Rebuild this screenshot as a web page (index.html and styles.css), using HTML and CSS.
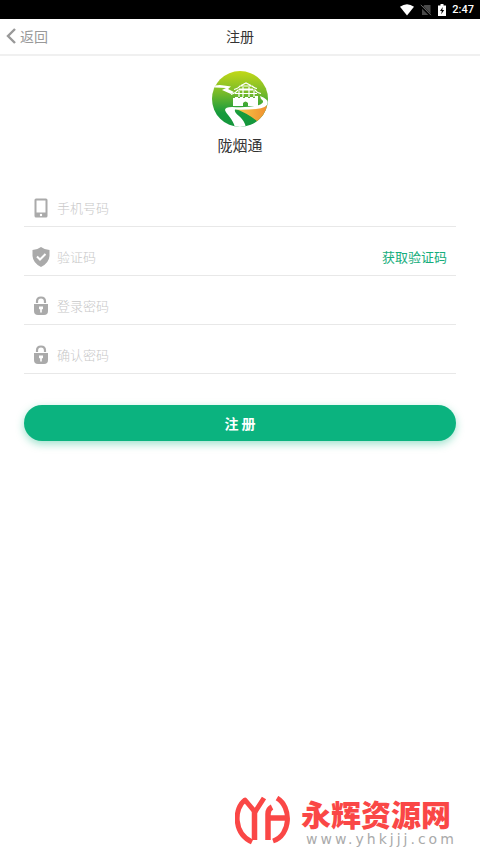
FILE: index.html
```html
<!DOCTYPE html>
<html lang="zh-CN">
<head>
<meta charset="utf-8">
<meta name="viewport" content="width=device-width, initial-scale=1">
<title>注册</title>
<link rel="stylesheet" href="styles.css">
</head>
<body>
<div class="status">
  <svg width="14" height="12" viewBox="0 0 14 12"><path d="M0 2.800Q7-2.200 14 2.800L7 11.500Z" fill="#fff"/></svg>
  <svg width="12" height="12" viewBox="0 0 12 12"><path d="M2 3.500L4.500 1H10.500V11H2Z" fill="#4a4a4a"/><path d="M.5 1.500L10.500 11.500" stroke="#000" stroke-width="2.500"/><path d="M.8 .8L11 11.200" stroke="#666" stroke-width="1"/></svg>
  <svg width="8" height="12" viewBox="0 0 8 12"><path d="M0 1.500H2.500V0H5.500V1.500H8V12H0Z" fill="#fff"/><path d="M4.800 3L2 7H3.800L3.200 10.300L6.200 6H4.300Z" fill="#000"/></svg>
  <span>2:47</span>
</div>
<header class="bar">
  <a class="back" href="#"><svg width="10" height="18" viewBox="0 0 10 18"><path d="M9 2L2 9L9 16" fill="none" stroke="#999" stroke-width="2.400"/></svg>返回</a>
  <h1>注册</h1>
</header>
<main>
  <div class="brand">
    <svg width="56" height="56" viewBox="0 0 56 56">
      <defs>
        <linearGradient id="sky" x1="0" y1="0" x2="0" y2="1"><stop offset="0" stop-color="#c2d817"/><stop offset=".4" stop-color="#75b92b"/><stop offset=".75" stop-color="#169b3c"/><stop offset="1" stop-color="#15963c"/></linearGradient>
        <linearGradient id="sand" x1="0" y1="0" x2="1" y2="0"><stop offset="0" stop-color="#f9cd4b"/><stop offset="1" stop-color="#f08b2c"/></linearGradient>
        <clipPath id="disc"><circle cx="28" cy="28" r="28"/></clipPath>
      </defs>
      <g clip-path="url(#disc)">
        <rect width="56" height="56" fill="url(#sky)"/>
        <path d="M24 38Q44 39 57 34V42L46 51Q37 43 24 38Z" fill="url(#sand)"/>
        <path d="M48 25Q56 28 56 32Q55 37 44 38Q32 39 23 38.500Q22 41 27 45Q33 50 34 57H23C22 49 14 43 13 39Q13 36 20 36Q38 37 47 34Q54 31 49 28Z" fill="#fff"/>
        <path d="M3 14.500Q8 13.500 12 14.500L19 15.500L16 18L22 21L19 23L10 19L14 17Q9 16.500 3 16.500Z" fill="#fff"/>
        <path fill-rule="evenodd" d="M21 27H23V26H26V27H28V26H31V27H33V26H36V27H38V26H41V27H43V25H46V35H21ZM31 35H36V32Q33.500 29 31 32Z" fill="#fff"/>
        <path d="M19 23.500Q24 22 26 19H43Q45 22 49 22.500M22 18.500Q27 17 28 15H40Q42 17 45 17.500M29 14.500L34 12L39 14.500M23 22.500H45M27 18H41M27 20V26M31 16V26M37 16V26M42 20V26" fill="none" stroke="#fff" stroke-width="1.200"/>
      </g>
    </svg>
    <p>陇烟通</p>
  </div>
  <form class="form">
    <div class="field">
      <label for="phone" aria-label="手机号码"><svg width="18" height="20" viewBox="0 0 18 20"><path fill-rule="evenodd" d="M4 .5H14Q15.500 .5 15.500 2V18Q15.500 19.500 14 19.500H4Q2.500 19.500 2.500 18V2Q2.500 .5 4 .5ZM4.500 2.500V14.500H13.500V2.500ZM9 15.800A1.200 1.200 0 1 0 9 18.200A1.200 1.200 0 1 0 9 15.800Z" fill="#aaa"/></svg></label>
      <input id="phone" type="tel" placeholder="手机号码">
    </div>
    <div class="field">
      <label for="code" aria-label="验证码"><svg width="18" height="20" viewBox="0 0 18 20"><path d="M9 0Q13 3 17.500 3V9Q17 16 9 20Q1 16 .5 9V3Q5 3 9 0Z" fill="#aaa"/><path d="M5 9.500L8 12.500L13.500 7" fill="none" stroke="#fff" stroke-width="2"/></svg></label>
      <input id="code" type="text" placeholder="验证码">
      <button class="send" type="button">获取验证码</button>
    </div>
    <div class="field">
      <label for="pass" aria-label="登录密码"><svg width="18" height="20" viewBox="0 0 18 20"><path d="M5 7V5.500Q5 1.500 9 1.500T13 5.500V7" fill="none" stroke="#aaa" stroke-width="2.200"/><path d="M2 8H16V15Q16 19 12 19H6Q2 19 2 15Z" fill="#aaa"/><path d="M7 10.500H11V13L9.800 13.500V16.500H8.200V13.500L7 13Z" fill="#fff"/></svg></label>
      <input id="pass" type="password" placeholder="登录密码">
    </div>
    <div class="field">
      <label for="again" aria-label="确认密码"><svg width="18" height="20" viewBox="0 0 18 20"><path d="M5 7V5.500Q5 1.500 9 1.500T13 5.500V7" fill="none" stroke="#aaa" stroke-width="2.200"/><path d="M2 8H16V15Q16 19 12 19H6Q2 19 2 15Z" fill="#aaa"/><path d="M7 10.500H11V13L9.800 13.500V16.500H8.200V13.500L7 13Z" fill="#fff"/></svg></label>
      <input id="again" type="password" placeholder="确认密码">
    </div>
    <button class="submit" type="submit">注 册</button>
  </form>
</main>
<footer class="mark">
  <svg width="56" height="50" viewBox="0 0 56 50" fill="none" stroke="#fa4746" stroke-width="5">
    <path d="M17 46C-2 37-1 12 10 4L20 16L29 2" stroke-linejoin="round"/>
    <path d="M19.500 14V44M33 44V18Q33 13 37 11M34 22H52" stroke-width="5.500"/>
    <path d="M42 2C57 11 56 39 38 45"/>
  </svg>
  <div class="site">
    <strong>永辉资源网</strong>
    <span>www.yhkjjj.com</span>
  </div>
</footer>
</body>
</html>
```
FILE: styles.css
```css
* {
  box-sizing: border-box;
}

body {
  margin: 0;
  min-height: 100vh;
  display: flex;
  flex-direction: column;
  background: #fff;
  color: #333;
  font-family: "Noto Sans CJK SC", sans-serif;
}

h1,
p {
  margin: 0;
  font-weight: 400;
}

svg {
  display: block;
  flex: none;
}

.status {
  display: flex;
  align-items: center;
  justify-content: flex-end;
  gap: 6px;
  height: 19px;
  padding-right: 6px;
  background: #000;
  color: #fff;
  font: 500 11px/18px Roboto, sans-serif;
}

.bar {
  display: grid;
  grid-template-columns: 1fr auto 1fr;
  align-items: center;
  height: 37px;
  padding: 0 6px 2px;
  border-bottom: 2px solid #f0f0f0;
}

.bar h1 {
  font-size: 14px;
  line-height: 20px;
}

.back {
  display: flex;
  align-items: center;
  gap: 4px;
  color: #999;
  font-size: 14px;
  line-height: 20px;
  text-decoration: none;
}

main {
  padding: 15px 24px;
}

.brand {
  display: flex;
  flex-direction: column;
  align-items: center;
  gap: 7px;
}

.brand p {
  font-size: 15px;
  line-height: 22px;
}

.form {
  margin-top: 22px;
}

.field {
  display: flex;
  align-items: flex-end;
  gap: 7px;
  height: 49px;
  padding: 0 9px 8px 8px;
  border-bottom: 1px solid #e8e8e8;
}

.field input {
  flex: 1;
  min-width: 0;
  height: 20px;
  padding: 0;
  border: 0;
  outline: 0;
  background: none;
  color: #333;
  font: 13px/20px "Noto Sans CJK SC", sans-serif;
}

.field input::placeholder {
  color: #c8c8c8;
  font-weight: 300;
}

.send {
  padding: 0;
  border: 0;
  background: none;
  color: #16ad7c;
  font: 13px/20px "Noto Sans CJK SC", sans-serif;
}

.submit {
  display: block;
  width: 100%;
  height: 36px;
  margin-top: 31px;
  padding: 0;
  border: 0;
  border-radius: 18px;
  background: #0bb37f;
  box-shadow: 0 3px 8px #0bb37f66;
  color: #fff;
  font: 700 14px/20px "Noto Sans CJK SC", sans-serif;
}

.mark {
  display: flex;
  gap: 10px;
  justify-content: flex-end;
  margin-top: auto;
  padding: 0 28px 8px 0;
}

.mark svg {
  margin-top: 1px;
}

.site {
  display: flex;
  flex-direction: column;
  width: 151px;
}

.site strong {
  color: #fa4746;
  font-size: 30px;
  font-weight: 900;
  line-height: 36px;
}

.site span {
  padding-left: 5px;
  color: #aaa;
  font: 14px/16px "DejaVu Sans", sans-serif;
  letter-spacing: 3px;
}
```
